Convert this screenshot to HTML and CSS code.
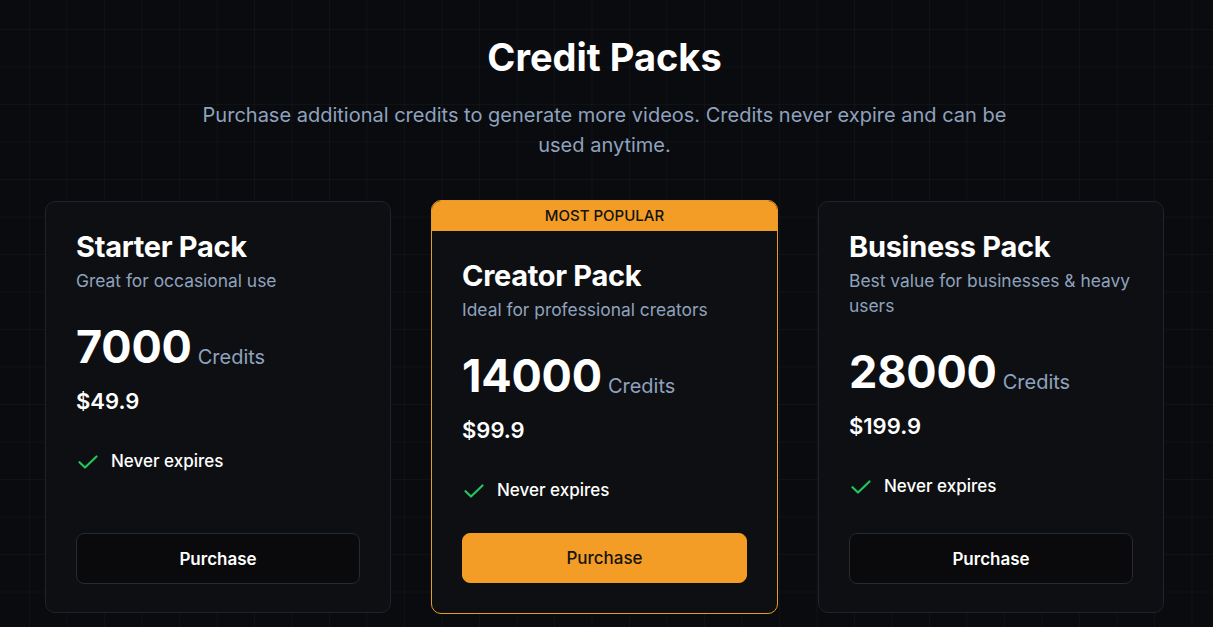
FILE: index.html
```html
<!DOCTYPE html>
<html lang="en">
<head>
<meta charset="utf-8">
<title>Credit Packs</title>
<link rel="stylesheet" href="styles.css">
</head>
<body>
<main class="page">
  <header class="intro">
    <h1 class="intro-title">Credit Packs</h1>
    <p class="intro-text">Purchase additional credits to generate more videos. Credits never expire and can be used anytime.</p>
  </header>
  <section class="packs">
    <article class="pack">
      <div class="pack-body">
        <h2 class="pack-name">Starter Pack</h2>
        <p class="pack-desc">Great for occasional use</p>
        <div class="pack-amount"><span class="pack-num">7000</span><span class="pack-unit">Credits</span></div>
        <div class="pack-price">$49.9</div>
        <ul class="pack-features">
          <li class="feature"><svg class="check" viewBox="0 0 20 14" width="20" height="14"><path d="M1.5 7.2 L7 12.5 L18.5 1.5" fill="none" stroke="#22c55e" stroke-width="2.2" stroke-linecap="round" stroke-linejoin="round"/></svg><span>Never expires</span></li>
        </ul>
        <button class="btn">Purchase</button>
      </div>
    </article>
    <article class="pack pack-popular">
      <div class="badge">MOST POPULAR</div>
      <div class="pack-body">
        <h2 class="pack-name">Creator Pack</h2>
        <p class="pack-desc">Ideal for professional creators</p>
        <div class="pack-amount"><span class="pack-num">14000</span><span class="pack-unit">Credits</span></div>
        <div class="pack-price">$99.9</div>
        <ul class="pack-features">
          <li class="feature"><svg class="check" viewBox="0 0 20 14" width="20" height="14"><path d="M1.5 7.2 L7 12.5 L18.5 1.5" fill="none" stroke="#22c55e" stroke-width="2.2" stroke-linecap="round" stroke-linejoin="round"/></svg><span>Never expires</span></li>
        </ul>
        <button class="btn btn-primary">Purchase</button>
      </div>
    </article>
    <article class="pack">
      <div class="pack-body">
        <h2 class="pack-name">Business Pack</h2>
        <p class="pack-desc">Best value for businesses &amp; heavy users</p>
        <div class="pack-amount"><span class="pack-num">28000</span><span class="pack-unit">Credits</span></div>
        <div class="pack-price">$199.9</div>
        <ul class="pack-features">
          <li class="feature"><svg class="check" viewBox="0 0 20 14" width="20" height="14"><path d="M1.5 7.2 L7 12.5 L18.5 1.5" fill="none" stroke="#22c55e" stroke-width="2.2" stroke-linecap="round" stroke-linejoin="round"/></svg><span>Never expires</span></li>
        </ul>
        <button class="btn">Purchase</button>
      </div>
    </article>
  </section>
</main>
</body>
</html>
```
FILE: styles.css
```css
* { box-sizing: border-box; }
html, body { margin: 0; padding: 0; }
body {
  font-family: Inter, "Noto Sans", sans-serif;
  color: #ffffff;
  background-color: #0a0b0e;
  background-image:
    linear-gradient(to right, rgba(255,255,255,0.028) 1px, transparent 1px),
    linear-gradient(to bottom, rgba(255,255,255,0.028) 1px, transparent 1px);
  background-size: 37.5px 37.5px;
  background-position: 29px 29px;
  min-height: 627px;
  overflow: hidden;
}
.page {
  width: 1119px;
  margin: 0 0 0 45px;
  padding: 37px 0 0;
}
.intro { text-align: center; }
.intro-title {
  margin: 0;
  font-size: 38px;
  line-height: 40px;
  font-weight: 700;
  letter-spacing: 0;
}
.intro-text {
  margin: 23px auto 0;
  max-width: 830px;
  font-size: 20px;
  line-height: 30px;
  color: #8fa2be;
}
.packs {
  margin-top: 41px;
  display: grid;
  grid-template-columns: 346px 347px 346px;
  column-gap: 40px;
  align-items: stretch;
}
.pack {
  display: flex;
  flex-direction: column;
  height: 412px;
  background: #0e0f12;
  border: 1px solid #1f232c;
  border-radius: 10px;
  overflow: hidden;
}
.pack-popular {
  border-color: #e99a2c;
  margin-top: -1px;
  height: 414px;
}
.badge {
  height: 30px;
  background: #f39d26;
  color: #121212;
  font-size: 15px;
  font-weight: 500;
  line-height: 30px;
  text-align: center;
  letter-spacing: 0;
}
.pack-body {
  flex: 1;
  display: flex;
  flex-direction: column;
  padding: 27px 30px 28px;
}
.pack-popular .pack-body { padding-bottom: 30px; }
.pack-name {
  margin: 0;
  font-size: 29px;
  line-height: 36px;
  font-weight: 700;
  letter-spacing: -0.3px;
}
.pack-desc {
  margin: 3px 0 0;
  font-size: 17.4px;
  line-height: 25px;
  color: #8fa2be;
}
.pack-amount {
  margin-top: 33px;
  display: flex;
  align-items: baseline;
  gap: 6px;
}
.pack-num {
  font-size: 45px;
  line-height: 42px;
  font-weight: 700;
  letter-spacing: -0.2px;
}
.pack-unit {
  font-size: 20px;
  color: #8fa2be;
  position: relative;
  top: 1px;
}
.pack-price {
  margin-top: 19px;
  font-size: 22px;
  line-height: 28px;
  font-weight: 600;
}
.pack-features {
  list-style: none;
  margin: 34px 0 0;
  padding: 0;
}
.feature {
  display: flex;
  align-items: center;
  gap: 13px;
  font-size: 17px;
  line-height: 25px;
  font-weight: 500;
  padding-left: 2px;
}
.check { flex: none; }
.btn {
  margin-top: auto;
  height: 51px;
  width: 100%;
  border-radius: 8px;
  border: 1px solid #262a33;
  background: #0a0a0c;
  color: #ffffff;
  font-family: inherit;
  font-size: 17px;
  font-weight: 600;
}
.btn-primary {
  height: 50px;
  background: #f39d26;
  border-color: #f39d26;
  color: #17130d;
  font-weight: 500;
}
```
